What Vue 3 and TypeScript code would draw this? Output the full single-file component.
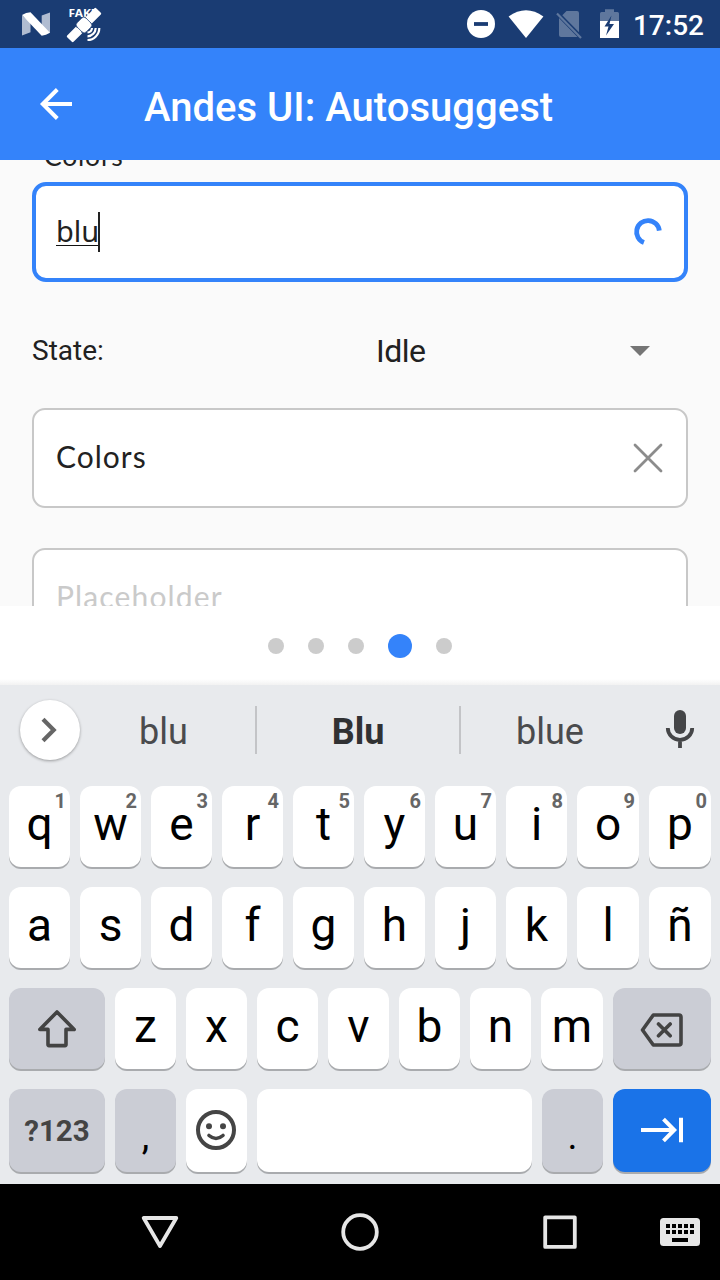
<script setup lang="ts">
interface Key {
  label: string
  hint?: string
  kind?: 'shift' | 'delete' | 'symbols' | 'punct' | 'emoji' | 'space' | 'next'
}

const letters = (row: string): Key[] => [...row].map((label) => ({ label }))

const rows: { name: string; keys: Key[] }[] = [
  { name: 'ten', keys: letters('qwertyuiop').map((k, i) => ({ ...k, hint: String((i + 1) % 10) })) },
  { name: 'ten', keys: letters('asdfghjklñ') },
  {
    name: 'third',
    keys: [{ label: '', kind: 'shift' }, ...letters('zxcvbnm'), { label: '', kind: 'delete' }],
  },
  {
    name: 'bottom',
    keys: [
      { label: '?123', kind: 'symbols' },
      { label: ',', kind: 'punct' },
      { label: '', kind: 'emoji' },
      { label: '', kind: 'space' },
      { label: '.', kind: 'punct' },
      { label: '', kind: 'next' },
    ],
  },
]

const pages = [0, 1, 2, 3, 4]
const activePage = 3
</script>

<template>
  <div class="screen">
    <header class="status">
      <svg class="status-icons" width="110" height="48" viewBox="0 0 110 48">
        <path d="M22 15.500 30.500 22V32.300L22 35.400ZM41.700 15.500 50 12.600V33L41.700 27Z" fill="#b0bcd1" />
        <path d="M22 15Q26 12.600 30.500 12.300L50 32.800Q46 35.200 41.700 35.700Z" fill="#fff" />
        <text x="68.500" y="17.300" class="fake" textLength="29" lengthAdjust="spacingAndGlyphs">FAKE</text>
        <g transform="translate(84 25) rotate(-45)">
          <path d="M-20.500-3.300q0-1.200 1.200-1.200H-7v9h-12.300q-1.200 0-1.200-1.200zM6.500-4.500h12.800q1.200 0 1.200 1.200v6.600q0 1.200-1.200 1.200H6.500z" fill="#fff" />
          <path d="M-9 0h18" stroke="#fff" stroke-width="5" />
          <rect x="-6.300" y="-6.500" width="12.600" height="13" rx="3" fill="#fff" stroke="#1a3c73" stroke-width=".7" />
        </g>
        <g fill="none" stroke="#fff" stroke-width="2.200">
          <path d="M87.500 32.500A5 5 0 0 0 92 28" />
          <path d="M87.500 36.300A8.500 8.500 0 0 0 95.700 28" />
          <path d="M87.500 40A12 12 0 0 0 99.300 28" />
        </g>
      </svg>
      <div class="status-right">
        <svg width="160" height="48" viewBox="462 0 160 48">
          <circle cx="481" cy="24" r="14" fill="#fff" />
          <path d="M474 24h14" stroke="#1a3c73" stroke-width="3.800" />
          <path d="M508.600 16.500Q526 3.800 543.400 16.500L526 38Z" fill="#fff" />
          <path d="M566.500 11h10.500a2 2 0 0 1 2 2V32.300L562.300 15.200ZM559 18 577.500 37H561a2 2 0 0 1-2-2Z" fill="#5f779d" />
          <path d="M557 13.500 581 38" stroke="#5f779d" stroke-width="2.200" />
          <path d="M600 21V13.500q0-1.500 1.500-1.500H605V9.300h9V12h3.500q1.500 0 1.500 1.500V21Z" fill="#5f779d" />
          <path d="M600 21h19v17h-19Z" fill="#fff" />
          <path d="M611.500 15.500 604.500 26.500h4l-2.500 9 8-11.500h-4.500Z" fill="#1a3c73" />
        </svg>
        <span class="clock">17:52</span>
      </div>
    </header>

    <div class="toolbar">
      <svg width="36" height="36" viewBox="38 86 36 36">
        <path d="M72 104H43M57.300 89.500 42.800 104l14.500 14.500" fill="none" stroke="#fff" stroke-width="4" />
      </svg>
      <h1>Andes UI: Autosuggest</h1>
    </div>

    <main class="content">
      <div class="field-label">Colors</div>
      <div class="field focused">
        <span class="typed"><span class="typed-text">blu</span></span><span class="cursor"></span>
        <svg class="field-icon" width="32" height="32" viewBox="632 216 32 32">
          <path d="M643.900 242.600A11.400 11.400 0 1 1 659.300 230.600" fill="none" stroke="#3483fa" stroke-width="4.800" />
        </svg>
      </div>
      <div class="state-row">
        <span class="state-name">State:</span>
        <span class="state-value">Idle</span>
        <svg width="20" height="10" viewBox="0 0 20 10"><path d="M0 0h20L10 10Z" fill="#757575" /></svg>
      </div>
      <div class="field">
        <span class="value">Colors</span>
        <svg class="field-icon" width="32" height="32" viewBox="0 0 32 32">
          <path d="M3 3 29 29M29 3 3 29" stroke="#8c8c8c" stroke-width="2.800" stroke-linecap="round" />
        </svg>
      </div>
      <div class="field next-field">
        <span class="placeholder">Placeholder</span>
      </div>
    </main>

    <nav class="pager">
      <i v-for="p in pages" :key="p" :class="{ active: p === activePage }"></i>
    </nav>

    <section class="keyboard">
      <div class="suggestions">
        <div class="expand">
          <svg width="60" height="60" viewBox="20 700 60 60">
            <path d="M43 719.300 53.700 730 43 740.700" fill="none" stroke="#666" stroke-width="4.200" />
          </svg>
        </div>
        <span class="word first">blu</span>
        <span class="divider"></span>
        <span class="word mid">Blu</span>
        <span class="divider"></span>
        <span class="word last">blue</span>
        <svg width="32" height="42" viewBox="664 708 32 42">
          <rect x="674" y="710" width="12" height="24" rx="6" fill="#454648" />
          <path d="M667.800 728A12.200 11.800 0 0 0 692.200 728M680 740v8" fill="none" stroke="#454648" stroke-width="3.800" />
        </svg>
      </div>

      <div v-for="(row, r) in rows" :key="r" class="row" :class="row.name">
        <div v-for="(key, k) in row.keys" :key="k" class="key" :class="key.kind">
          <span v-if="key.label" class="glyph">{{ key.label }}</span>
          <span v-if="key.hint" class="hint">{{ key.hint }}</span>
          <svg v-if="key.kind === 'shift'" width="96" height="81" viewBox="0 0 96 81">
            <path d="M48 24 65.200 41.400H57V56.600a1 1 0 0 1-1 1H40a1 1 0 0 1-1-1V41.400H30.800Z" class="line" />
          </svg>
          <svg v-else-if="key.kind === 'delete'" width="98" height="81" viewBox="0 0 98 81">
            <path d="M40.300 27H66a2 2 0 0 1 2 2V55a2 2 0 0 1-2 2H40.300L29.500 42ZM45.500 36 57.200 47.800M57.200 36 45.500 47.800" class="line" />
          </svg>
          <svg v-else-if="key.kind === 'emoji'" width="61" height="82" viewBox="0 0 61 82">
            <circle cx="30" cy="41" r="18" class="face" />
            <circle cx="23" cy="37.300" r="3" fill="#454545" />
            <circle cx="37" cy="37.300" r="3" fill="#454545" />
            <path d="M23 46.500Q30 52.500 37 46.500" class="line" />
          </svg>
          <svg v-else-if="key.kind === 'next'" width="98" height="82" viewBox="0 0 98 82">
            <path d="M28 41H61M50.500 30.200 61.200 41 50.500 51.800M68 28.800V53.200" fill="none" stroke="#fff" stroke-width="4" />
          </svg>
        </div>
      </div>
    </section>

    <footer class="nav">
      <svg width="720" height="96" viewBox="0 1184 720 96">
        <g fill="none" stroke="#e6e6e6" stroke-width="3.800" stroke-linejoin="round">
          <path d="M143.700 1218H176.300L160 1246Z" />
          <circle cx="360" cy="1232" r="16.800" />
          <rect x="545.200" y="1217.300" width="29.600" height="29.600" />
        </g>
        <rect x="660" y="1218" width="40" height="28" rx="3.500" fill="#e6e6e6" />
        <path d="M666 1226h28M666 1232h28" stroke="#000" stroke-width="4" stroke-dasharray="4 2" />
        <path d="M672 1240h16" stroke="#000" stroke-width="4" />
      </svg>
    </footer>
  </div>
</template>

<style>
body {
  margin: 0;
}
</style>

<style scoped>
.screen {
  width: 720px;
  height: 1280px;
  overflow: hidden;
  display: flex;
  flex-direction: column;
  font-family: Roboto, "Liberation Sans", sans-serif;
  background: #fafafa;
}
svg {
  display: block;
  flex: none;
}
.status {
  height: 48px;
  flex: none;
  display: flex;
  justify-content: space-between;
  background: #1a3c73;
  color: #fff;
}
.fake {
  font: bold 10px "Noto Sans", sans-serif;
  fill: #fff;
}
.status-right {
  display: flex;
  padding-right: 16px;
}
.clock {
  width: 82px;
  text-align: right;
  font-size: 28px;
  font-weight: 500;
  line-height: 51px;
}
.toolbar {
  height: 112px;
  flex: none;
  display: flex;
  align-items: center;
  padding-left: 38px;
  background: #3483fa;
}
h1 {
  margin: 7px 0 0 70px;
  font-size: 40px;
  font-weight: 500;
  line-height: 48px;
  letter-spacing: 0.030px;
  color: #fff;
  white-space: nowrap;
}
.content {
  height: 446px;
  flex: none;
  overflow: hidden;
  padding: 0 32px;
  box-sizing: border-box;
}
.field-label {
  margin: -22px 0 0;
  padding-left: 12px;
  height: 44px;
  font: 26.500px/36px Lato, sans-serif;
  letter-spacing: 0.800px;
  color: #222;
}
.field {
  height: 100px;
  box-sizing: border-box;
  display: flex;
  align-items: center;
  padding: 0 22px;
  border: 2px solid #c8c8c8;
  border-radius: 13px;
  background: #fff;
  color: #222;
  font: 30px/40px Lato, sans-serif;
}
.focused {
  border: 4px solid #3483fa;
  padding: 0 20px;
  border-radius: 14px;
}
.typed {
  width: 42px;
  height: 34px;
  box-sizing: border-box;
  border-bottom: 1px solid #111;
  margin-top: -6px;
}
.typed-text {
  display: block;
  font: 29px/38px "Noto Sans", sans-serif;
}
.cursor {
  width: 2px;
  height: 40px;
  background: #222;
}
.field-icon {
  margin-left: auto;
}
.value,
.placeholder {
  letter-spacing: 1px;
  margin-top: -5px;
}
.placeholder {
  letter-spacing: 1.150px;
  color: #cacaca;
}
.next-field {
  margin-top: 40px;
}
.state-row {
  height: 126px;
  display: flex;
  align-items: center;
  padding: 10px 38px 0 0;
  box-sizing: border-box;
  color: #212121;
}
.state-name {
  width: 344px;
  font-size: 28px;
}
.state-value {
  flex: 1;
  margin-top: 2px;
  font-size: 32px;
  letter-spacing: -0.500px;
}
.state-row svg {
  margin-top: 2px;
}
.pager {
  height: 79px;
  flex: none;
  display: flex;
  align-items: center;
  justify-content: center;
  gap: 24px;
  background: linear-gradient(#fff 0 73px, #f2f2f2 79px);
}
.pager i {
  width: 16px;
  height: 16px;
  border-radius: 50%;
  background: #ccc;
}
.pager .active {
  width: 24px;
  height: 24px;
  background: #3483fa;
}
.keyboard {
  height: 499px;
  flex: none;
  background: #e8eaed;
}
.suggestions {
  height: 101px;
  padding: 0 24px 0 20px;
  display: flex;
  align-items: flex-start;
}
.expand {
  width: 60px;
  height: 60px;
  margin: 15px -8px 0 0;
  border-radius: 50%;
  background: #fff;
  box-shadow: 0 1px 3px rgba(0, 0, 0, 0.350);
}
.word {
  text-align: center;
  font-size: 36px;
  line-height: 42px;
  margin-top: 26px;
  color: #4a4b4d;
}
.first {
  width: 183px;
}
.mid {
  width: 202px;
  font-weight: 700;
  color: #303133;
}
.last {
  width: 178px;
}
.divider {
  width: 2px;
  height: 48px;
  margin-top: 21px;
  background: #c3c4c7;
}
.suggestions > svg {
  margin: 23px 0 0 25px;
}
.row {
  display: grid;
  grid-template-rows: 81px;
  gap: 10px;
  padding: 0 9px;
  height: 81px;
  margin-bottom: 20px;
}
.ten {
  grid-template-columns: repeat(8, 61px) 62px 62px;
}
.third {
  grid-template-columns: 96px repeat(6, 61px) 62px 98px;
}
.bottom {
  grid-template-columns: 96px 61px 61px 275px 61px 98px;
  grid-template-rows: 82.500px;
  height: 83px;
  margin-bottom: 0;
}
.key {
  position: relative;
  border-radius: 12px;
  background: #fff;
  box-shadow: 0 2px 0 #a9abae;
  text-align: center;
  color: #000;
}
.glyph {
  display: block;
  font-size: 46px;
  line-height: 76px;
}
.hint {
  position: absolute;
  top: 4px;
  right: 4px;
  font-size: 20px;
  font-weight: 700;
  line-height: 23px;
  color: #666;
}
.shift,
.delete,
.symbols,
.punct {
  background: #cbcdd5;
}
.symbols .glyph {
  font-size: 29.500px;
  font-weight: 700;
  line-height: 85px;
  color: #444;
}
.punct .glyph {
  font-size: 38px;
  line-height: 95px;
}
.next {
  background: #1a73e8;
}
.line {
  fill: none;
  stroke: #434343;
  stroke-width: 3.600;
  stroke-linejoin: round;
  stroke-linecap: round;
}
.face {
  fill: none;
  stroke: #454545;
  stroke-width: 4;
}
.nav {
  height: 96px;
  flex: none;
  background: #000;
}
</style>
